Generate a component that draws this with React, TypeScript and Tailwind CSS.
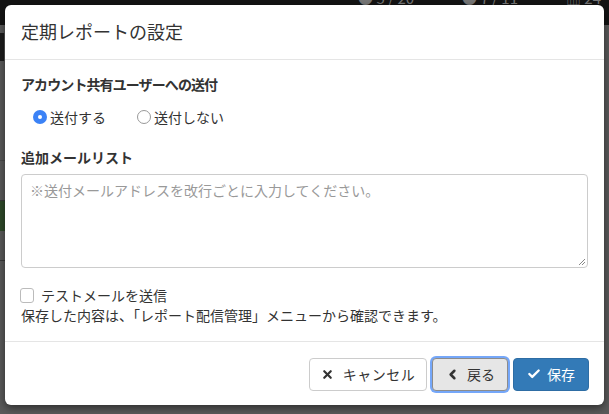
import { Check, ChevronLeft, X } from 'lucide-react';

const font = { fontFamily: '"Noto Sans CJK JP", "Noto Sans", sans-serif' };

function Backdrop() {
  return (
    <div className="absolute inset-0 flex flex-col bg-[#5a5a5a]">
      <div className="h-[25px] bg-[#141414] flex justify-end items-start gap-12 pr-2 text-[15px] leading-none text-[#777]">
        <span className="-mt-[10px]">● 5 / 20</span>
        <span className="-mt-[10px]">● 7 / 11</span>
        <span className="-mt-[10px]">▥ 24</span>
      </div>
      <div className="flex-1 flex">
        <div className="w-[5px] flex flex-col">
          <div className="h-[8px]" />
          <div className="h-[28px] bg-[#1c1c1c] border-r border-[#555]" />
          <div className="h-[100px] border-b border-[#4a4a4a]" />
          <div className="h-[40px] border-b border-[#3a3a3a]" />
          <div className="h-[30px] bg-[#2f4a2a]" />
          <div className="h-[30px] border-b border-[#3a3a3a]" />
        </div>
      </div>
    </div>
  );
}

export default function App() {
  return (
    <div className="relative w-[609px] h-[414px] overflow-hidden" style={font}>
      <Backdrop />
      <div className="absolute left-[5px] top-[5px] w-[599px] h-[400px] bg-white rounded-[6px] shadow-[0_3px_9px_rgba(0,0,0,0.5)] flex flex-col text-[#333]">
        <div className="h-[55px] border-b border-[#e5e5e5] px-[16px] flex items-center">
          <h4 className="text-[18px] leading-none font-normal -mt-[3px]">定期レポートの設定</h4>
        </div>
        <div className="px-[16px] pt-[14px] pb-[16px] border-b border-[#e5e5e5] flex flex-col">
          <div className="text-[14px] font-bold leading-[20px] tracking-[-0.9px]">アカウント共有ユーザーへの送付</div>
          <div className="flex items-center pl-[12px] mt-[13px] h-[20px] text-[14px]">
            <label className="flex items-center gap-[3px]">
              <span className="w-[14px] h-[14px] rounded-full bg-[#3b82f6] flex items-center justify-center">
                <span className="w-[4px] h-[4px] rounded-full bg-white" />
              </span>
              送付する
            </label>
            <label className="flex items-center gap-[3px] ml-[31px]">
              <span className="w-[14px] h-[14px] rounded-full border border-[#999] bg-white" />
              送付しない
            </label>
          </div>
          <div className="text-[14px] font-bold leading-[20px] mt-[20px]">追加メールリスト</div>
          <div className="relative mt-[7px] h-[94px] border border-[#ccc] rounded-[4px] px-[8px] py-[5px] text-[14px] text-[#999] leading-[20px]">
            ※送付メールアドレスを改行ごとに入力してください。
            <svg className="absolute right-[1px] bottom-[1px]" width="8" height="8" viewBox="0 0 8 8">
              <path d="M7 1 L1 7 M7 4 L4 7" stroke="#888" strokeWidth="1" />
            </svg>
          </div>
          <label className="flex items-center gap-[7px] mt-[18px] text-[14px] leading-[18px] -ml-[1px]">
            <span className="w-[14px] h-[15px] rounded-[3px] border border-[#bbb] bg-white" />
            テストメールを送信
          </label>
          <div className="text-[14px] leading-[20px] mt-[1px]">保存した内容は、「レポート配信管理」メニューから確認できます。</div>
        </div>
        <div className="flex-1 flex items-center justify-end gap-[5px] px-[15px] pt-[1px]">
          <button className="h-[33px] w-[118px] justify-center flex items-center gap-[9px] border border-[#ccc] rounded-[4px] bg-white text-[14px] text-[#333] tracking-[0.5px]">
            <X size={13} strokeWidth={4} />
            キャンセル
          </button>
          <button className="h-[33px] w-[76px] justify-center flex items-center gap-[7px] border border-[#8c8c8c] rounded-[4px] bg-[#e6e6e6] text-[14px] text-[#333] shadow-[0_0_0_2px_rgba(59,130,246,0.7)]">
            <ChevronLeft size={15} strokeWidth={4} />
            戻る
          </button>
          <button className="h-[33px] w-[76px] justify-center flex items-center gap-[6px] border border-[#2e6da4] rounded-[4px] bg-[#337ab7] text-[14px] text-white">
            <Check size={14} strokeWidth={4} />
            保存
          </button>
        </div>
      </div>
    </div>
  );
}
